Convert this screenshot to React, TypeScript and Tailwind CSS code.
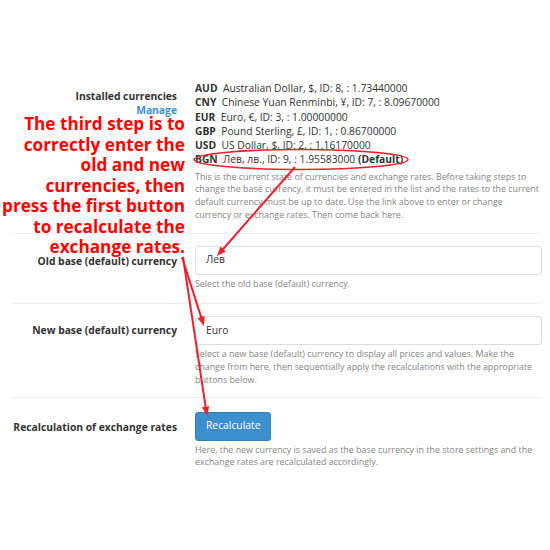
import React from "react";

const currencies = [
  { code: "AUD", text: "Australian Dollar, $, ID: 8, : 1.73440000" },
  { code: "CNY", text: "Chinese Yuan Renminbi, ¥, ID: 7, : 8.09670000" },
  { code: "EUR", text: "Euro, €, ID: 3, : 1.00000000" },
  { code: "GBP", text: "Pound Sterling, £, ID: 1, : 0.86700000" },
  { code: "USD", text: "US Dollar, $, ID: 2, : 1.16170000" },
];

const annotationLines = [
  "The third step is to",
  "correctly enter the",
  "old and new",
  "currencies, then",
  "press the first button",
  "to recalculate the",
  "exchange rates.",
];

function Arrow({ x1, y1, x2, y2 }: { x1: number; y1: number; x2: number; y2: number }) {
  const angle = Math.atan2(y2 - y1, x2 - x1);
  const len = 10;
  const spread = 0.38;
  const ax = x2 - len * Math.cos(angle - spread);
  const ay = y2 - len * Math.sin(angle - spread);
  const bx = x2 - len * Math.cos(angle + spread);
  const by = y2 - len * Math.sin(angle + spread);
  const sx = x2 - (len - 3) * Math.cos(angle);
  const sy = y2 - (len - 3) * Math.sin(angle);
  return (
    <g>
      <line x1={x1} y1={y1} x2={sx} y2={sy} stroke="#e8232b" strokeWidth={2} />
      <polygon points={`${x2},${y2} ${ax},${ay} ${bx},${by}`} fill="#e8232b" />
    </g>
  );
}

function Row({
  label,
  children,
  labelClass,
  className,
}: {
  label: React.ReactNode;
  children: React.ReactNode;
  labelClass?: string;
  className?: string;
}) {
  return (
    <div className={`grid grid-cols-[183px_347px] border-t border-[#eeeeee] ${className ?? ""}`}>
      <div className={`pr-[18px] text-right text-[10.3px] font-bold leading-[14.3px] text-[#333] ${labelClass ?? ""}`}>
        {label}
      </div>
      <div>{children}</div>
    </div>
  );
}

function Help({ children }: { children: React.ReactNode }) {
  return <p className="mt-[3px] text-[8.9px] leading-[12.7px] text-[#858585]">{children}</p>;
}

export default function App() {
  return (
    <div className="relative h-[550px] w-[550px] overflow-hidden bg-white font-['Open_Sans',sans-serif]">
      <div className="ml-[12px] w-[530px] pt-[81px]">
        <div className="grid grid-cols-[183px_347px] pb-[11px]">
          <div className="pr-[18px] pt-[8px] text-right text-[10.3px] leading-[14.3px]">
            <div className="font-bold text-[#333]">Installed currencies</div>
            <div className="font-bold text-[#3a8fd0]">Manage</div>
          </div>
          <div>
            <ul className="text-[10.3px] leading-[14.3px] text-[#333]">
              {currencies.map((c) => (
                <li key={c.code}>
                  <span className="font-bold">{c.code}</span>&nbsp; {c.text}
                </li>
              ))}
              <li>
                <span className="font-bold">BGN</span>&nbsp; Лев, лв., ID: 9, : 1.95583000{" "}
                <span className="font-bold">(Default)</span>
              </li>
            </ul>
            <p className="mt-[4px] text-[8.9px] leading-[12.7px] text-[#858585]">
              This is the current state of currencies and exchange rates. Before taking steps to change the base
              currency, it must be entered in the list and the rates to the current default currency must be up to
              date. Use the link above to enter or change
              <br />
              currency or exchange rates. Then come back here.
            </p>
          </div>
        </div>

        <Row label="Old base (default) currency" labelClass="pt-[8px]" className="pt-[12px] pb-[13px]">
          <div className="flex h-[29px] items-center rounded-[3px] border border-[#dddddd] px-[10px] text-[10.3px] text-[#333]">
            Лев
          </div>
          <Help>Select the old base (default) currency.</Help>
        </Row>

        <Row label="New base (default) currency" labelClass="pt-[7px]" className="pt-[12px] pb-[11px]">
          <div className="flex h-[29px] items-center rounded-[3px] border border-[#dddddd] px-[10px] text-[10.3px] text-[#333]">
            Euro
          </div>
          <Help>
            Select a new base (default) currency to display all prices and values. Make the change from here, then
            sequentially apply the recalculations with the appropriate buttons below.
          </Help>
        </Row>

        <Row label="Recalculation of exchange rates" labelClass="pt-[9px] whitespace-nowrap" className="pt-[13px]">
          <button
            type="button"
            className="h-[29px] rounded-[3px] border border-[#357fb8] bg-[#3c8fcf] px-[10px] text-[10.3px] text-white"
          >
            Recalculate
          </button>
          <Help>
            Here, the new currency is saved as the base currency in the store settings and the exchange rates are
            recalculated accordingly.
          </Help>
        </Row>
      </div>

      <div className="absolute left-0 top-[114px] w-[185px] text-right text-[17.2px] font-bold leading-[20.5px] text-[#ff0000]">
        {annotationLines.map((line) => (
          <div key={line} className="whitespace-nowrap">
            {line}
          </div>
        ))}
      </div>

      <svg className="pointer-events-none absolute left-0 top-0" width={550} height={550} viewBox="0 0 550 550">
        <ellipse cx={301} cy={159.5} rx={107} ry={10} fill="none" stroke="#e8232b" strokeWidth={1.6} />
        <Arrow x1={295} y1={167} x2={217} y2={256} />
        <Arrow x1={182} y1={257} x2={204} y2={326} />
        <Arrow x1={183} y1={257} x2={207} y2={416} />
      </svg>
    </div>
  );
}
